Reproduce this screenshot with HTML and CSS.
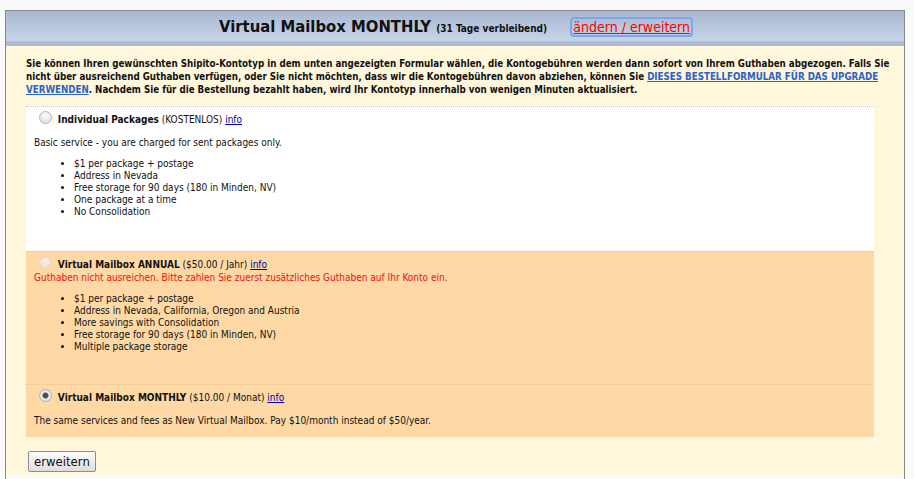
FILE: index.html
```html
<!DOCTYPE html>
<html lang="de">

<head>
    <meta charset="UTF-8">
    <title>Kontotyp ändern</title>
    <link rel="stylesheet" href="styles.css">
</head>

<body>

    <div class="panel">
        <div class="panel-head">
            <h1>Virtual Mailbox MONTHLY <small>(31 Tage verbleibend)</small>
                <a href="#" class="change">ändern / erweitern</a></h1>
        </div>

        <div class="panel-body">
            <p class="intro">Sie können Ihren gewünschten Shipito-Kontotyp in dem unten angezeigten Formular wählen, die Kontogebühren werden dann sofort von Ihrem Guthaben abgezogen. Falls Sie nicht über ausreichend Guthaben verfügen, oder Sie nicht möchten, dass wir die Kontogebühren davon abziehen, können Sie <a href="#">DIESES BESTELLFORMULAR FÜR DAS UPGRADE VERWENDEN</a>. Nachdem Sie für die Bestellung bezahlt haben, wird Ihr Kontotyp innerhalb von wenigen Minuten aktualisiert.</p>

            <div class="plans">
                <div class="plan free">
                    <label class="plan-title"><input type="radio" name="plan"> <b>Individual Packages</b> (KOSTENLOS) <a href="#">info</a></label>
                    <p class="desc">Basic service - you are charged for sent packages only.</p>
                    <ul>
                        <li>$1 per package + postage</li>
                        <li>Address in Nevada</li>
                        <li>Free storage for 90 days (180 in Minden, NV)</li>
                        <li>One package at a time</li>
                        <li>No Consolidation</li>
                    </ul>
                </div>

                <div class="plan annual">
                    <label class="plan-title"><input type="radio" name="plan" disabled> <b>Virtual Mailbox ANNUAL</b> ($50.00 / Jahr) <a href="#">info</a></label>
                    <p class="warn">Guthaben nicht ausreichen. Bitte zahlen Sie zuerst zusätzliches Guthaben auf Ihr Konto ein.</p>
                    <ul>
                        <li>$1 per package + postage</li>
                        <li>Address in Nevada, California, Oregon and Austria</li>
                        <li>More savings with Consolidation</li>
                        <li>Free storage for 90 days (180 in Minden, NV)</li>
                        <li>Multiple package storage</li>
                    </ul>
                </div>

                <div class="plan monthly">
                    <label class="plan-title"><input type="radio" name="plan" checked> <b>Virtual Mailbox MONTHLY</b> ($10.00 / Monat) <a href="#">info</a></label>
                    <p class="desc">The same services and fees as New Virtual Mailbox. Pay $10/month instead of $50/year.</p>
                </div>
            </div>

            <button class="submit">erweitern</button>
        </div>
    </div>

</body>

</html>
```

FILE: styles.css
```css
body {
    background-color: #fafafa;
    margin: 10px 9px 0 5px;
    font-family: "DejaVu Sans Condensed", "DejaVu Sans", sans-serif;
    font-size: 10px;
    color: #111;
}

.panel {
    border: 1px solid #888;
    border-bottom: none;
    padding-bottom: 20px;
}

.panel-head {
    background: linear-gradient(#a9b8cf, #c7d4ea);
    border-bottom: 5px solid #adbcd1;
    height: 30px;
}

h1 {
    margin: 0;
    text-align: center;
    font-size: 16.5px;
    line-height: 30px;
    padding-top: 1px;
}

h1 small {
    font-size: 10px;
}

.change {
    margin-left: 20px;
    font-size: 14px;
    font-weight: normal;
    color: red;
    outline: 2px solid #7ea6ec;
    outline-offset: 0;
    border-radius: 2px;
    padding: 0 1px;
}

.panel-body {
    background-color: #fff7dc;
    padding: 11px 30px 3px 20px;
}

.intro {
    margin: 0 -20px 10px 0;
    font-weight: bold;
    font-size: 9.7px;
    line-height: 13px;
}

.intro a {
    color: #2a62c8;
}

.plan {
    border-top: 1px dotted #c8c8c8;
    padding: 4px 8px 0 8px;
}

.free {
    background-color: white;
    height: 140px;
}

.annual {
    background-color: #fed9a6;
    height: 128px;
}

.monthly {
    background-color: #fed9a6;
    height: 48px;
}

.plan-title {
    display: block;
    line-height: 14px;
}

.plan a {
    color: #0000a0;
}

input[type="radio"] {
    appearance: none;
    width: 13px;
    height: 13px;
    border-radius: 50%;
    border: 1px solid #b4b4b4;
    background: radial-gradient(circle at 50% 35%, #fdfdfd, #d8d8d8);
    margin: 0 3px 0 5px;
    vertical-align: -1px;
}

input[type="radio"]:disabled {
    border-color: #e4d4bc;
    background: radial-gradient(circle at 50% 35%, #fbeedd, #ecdcc4);
}

input[type="radio"]:checked {
    background: radial-gradient(circle, #444 0, #555 2.5px, #ececec 3.5px, #d4d4d4 100%);
}

.desc {
    margin: 10px 0 0 0;
}

.warn {
    margin: 0;
    color: #f01010;
}

ul {
    margin: 10px 0 0 0;
    padding-left: 40px;
    line-height: 12px;
}

.submit {
    margin: 14px 0 0 2px;
    font-family: "DejaVu Sans Condensed", "DejaVu Sans", sans-serif;
    font-size: 13px;
    line-height: 15px;
    padding: 2px 5px;
    background: linear-gradient(#fbfbfb, #dedede);
    border: 1px solid #8d8d8d;
    border-radius: 2px;
    color: #111;
}
```
